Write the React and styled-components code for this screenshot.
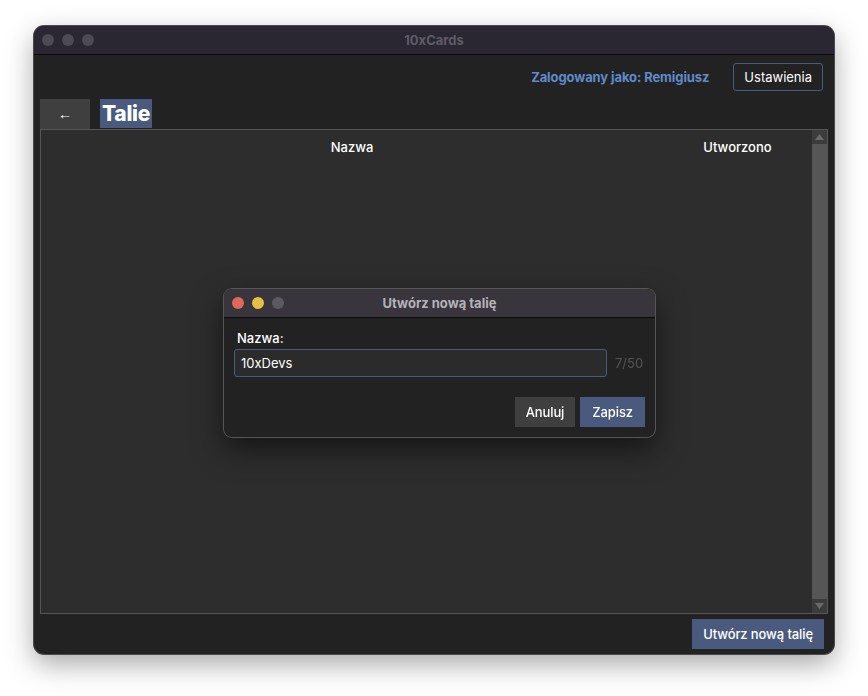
import React, { useState } from 'react';
import styled, { createGlobalStyle } from 'styled-components';

const GlobalStyle = createGlobalStyle`
  html, body { margin: 0; padding: 0; background: #ffffff; }
  body { font-family: Inter, "Liberation Sans", sans-serif; }
`;

const Page = styled.div`
  padding: 26px 34px 0 34px;
  height: 696px;
  box-sizing: border-box;
`;

const Window = styled.div`
  position: relative;
  width: 800px;
  height: 628px;
  border-radius: 10px;
  overflow: hidden;
  background: #222222;
  box-shadow: 0 0 0 1px #4a4a4a, 0 10px 28px rgba(0, 0, 0, 0.35);
  display: flex;
  flex-direction: column;
`;

const TitleBar = styled.div`
  height: 28px;
  flex-shrink: 0;
  background: ${({ dialog }) => (dialog ? '#38353d' : '#2a2732')};
  border-bottom: 1px solid #0a0a0a;
  display: flex;
  align-items: center;
  position: relative;
  padding-left: 8px;
  gap: 8px;
`;

const Light = styled.span`
  width: 12px;
  height: 12px;
  border-radius: 50%;
  background: ${({ color }) => color};
`;

const TitleText = styled.div`
  position: absolute;
  left: 0;
  right: 0;
  text-align: center;
  font-size: 13px;
  font-weight: 700;
  color: ${({ dim }) => (dim ? '#5e5b66' : '#b4b2b8')};
  pointer-events: none;
`;

const Content = styled.div`
  flex: 1;
  display: flex;
  flex-direction: column;
  padding: 0 6px;
  min-height: 0;
`;

const TopBar = styled.div`
  height: 44px;
  display: flex;
  align-items: center;
  justify-content: flex-end;
  gap: 24px;
  padding-right: 5px;
`;

const UserLabel = styled.span`
  color: #5f8acb;
  font-weight: 700;
  font-size: 13px;
  letter-spacing: -0.1px;
`;

const OutlineButton = styled.button`
  height: 28px;
  padding: 0 10px;
  background: transparent;
  border: 1.5px solid #4a5a7c;
  border-radius: 3px;
  color: #ffffff;
  font-family: inherit;
  font-size: 13px;
`;

const HeaderRow = styled.div`
  display: flex;
  align-items: stretch;
  gap: 10px;
  height: 30px;
`;

const BackButton = styled.button`
  width: 50px;
  background: #3f3f3f;
  border: none;
  color: #ffffff;
  font-size: 14px;
  display: flex;
  align-items: center;
  justify-content: center;
  padding: 0;
`;

const Heading = styled.h1`
  margin: 0;
  height: 29px;
  padding: 0 2px;
  background: #4a5a7e;
  color: #ffffff;
  font-size: 21px;
  font-weight: 800;
  line-height: 29px;
  letter-spacing: -0.3px;
`;

const Table = styled.div`
  flex: 1;
  display: flex;
  background: #2d2d2d;
  border: 1px solid #555555;
  min-height: 0;
`;

const TableBody = styled.div`
  flex: 1;
  display: grid;
  grid-template-columns: 622px 1fr;
  align-content: start;
`;

const HeadCell = styled.div`
  height: 34px;
  display: flex;
  align-items: center;
  justify-content: center;
  color: #ffffff;
  font-size: 13px;
  font-weight: 500;
`;

const ScrollBar = styled.div`
  width: 15px;
  display: flex;
  flex-direction: column;
  background: #3c3c3c;
`;

const ScrollArrow = styled.div`
  height: 14px;
  display: flex;
  align-items: center;
  justify-content: center;
  background: #3c3c3c;
`;

const ScrollTrack = styled.div`
  flex: 1;
  background: #565656;
`;

const BottomBar = styled.div`
  height: 40px;
  display: flex;
  align-items: center;
  justify-content: flex-end;
  padding-right: 4px;
`;

const FillButton = styled.button`
  height: 30px;
  padding: 0 ${({ pad }) => pad || 11}px;
  background: ${({ primary }) => (primary ? '#4a5a7e' : '#3f3f3f')};
  border: none;
  color: #ffffff;
  font-family: inherit;
  font-size: 13px;
  font-weight: 500;
  letter-spacing: -0.1px;
`;

const Dialog = styled.div`
  position: absolute;
  left: 190px;
  top: 263px;
  width: 431px;
  height: 148px;
  border-radius: 8px;
  overflow: hidden;
  background: #222222;
  box-shadow: 0 0 0 1px #555555, 0 12px 30px rgba(0, 0, 0, 0.55);
  display: flex;
  flex-direction: column;
`;

const DialogBody = styled.div`
  padding: 12px 10px 10px 10px;
  display: flex;
  flex-direction: column;
  flex: 1;
`;

const FieldLabel = styled.label`
  color: #ffffff;
  font-size: 13px;
  font-weight: 500;
  margin-bottom: 3px;
  padding-left: 3px;
`;

const FieldRow = styled.div`
  display: flex;
  align-items: center;
  gap: 8px;
`;

const Input = styled.input`
  width: 373px;
  height: 28px;
  box-sizing: border-box;
  background: #2b2b2b;
  border: 1.5px solid #4a5a7e;
  border-radius: 3px;
  color: #ffffff;
  font-family: inherit;
  font-size: 13px;
  padding: 0 6px;
  outline: none;
  caret-color: #ffffff;
`;

const Counter = styled.span`
  color: #555555;
  font-size: 13px;
`;

const DialogActions = styled.div`
  margin-top: auto;
  display: flex;
  justify-content: flex-end;
  gap: 5px;
`;

const Arrow = ({ up }) => (
  <svg width="9" height="6" viewBox="0 0 9 6">
    <path d={up ? 'M0 6 L4.5 0 L9 6 Z' : 'M0 0 L4.5 6 L9 0 Z'} fill="#6a6a6a" />
  </svg>
);

export default function App() {
  const [name, setName] = useState('10xDevs');
  return (
    <>
      <GlobalStyle />
      <Page>
        <Window>
          <TitleBar>
            <Light color="#4d4a55" />
            <Light color="#4d4a55" />
            <Light color="#4d4a55" />
            <TitleText dim>10xCards</TitleText>
          </TitleBar>
          <Content>
            <TopBar>
              <UserLabel>Zalogowany jako: Remigiusz</UserLabel>
              <OutlineButton>Ustawienia</OutlineButton>
            </TopBar>
            <HeaderRow>
              <BackButton>←</BackButton>
              <Heading>Talie</Heading>
            </HeaderRow>
            <Table>
              <TableBody>
                <HeadCell>Nazwa</HeadCell>
                <HeadCell>Utworzono</HeadCell>
              </TableBody>
              <ScrollBar>
                <ScrollArrow><Arrow up /></ScrollArrow>
                <ScrollTrack />
                <ScrollArrow><Arrow /></ScrollArrow>
              </ScrollBar>
            </Table>
            <BottomBar>
              <FillButton primary>Utwórz nową talię</FillButton>
            </BottomBar>
          </Content>
          <Dialog>
            <TitleBar dialog>
              <Light color="#e0685a" />
              <Light color="#e5bf45" />
              <Light color="#5c5a61" />
              <TitleText>Utwórz nową talię</TitleText>
            </TitleBar>
            <DialogBody>
              <FieldLabel>Nazwa:</FieldLabel>
              <FieldRow>
                <Input value={name} onChange={(e) => setName(e.target.value)} autoFocus />
                <Counter>{name.length}/50</Counter>
              </FieldRow>
              <DialogActions>
                <FillButton pad={11}>Anuluj</FillButton>
                <FillButton primary pad={12}>Zapisz</FillButton>
              </DialogActions>
            </DialogBody>
          </Dialog>
        </Window>
      </Page>
    </>
  );
}
